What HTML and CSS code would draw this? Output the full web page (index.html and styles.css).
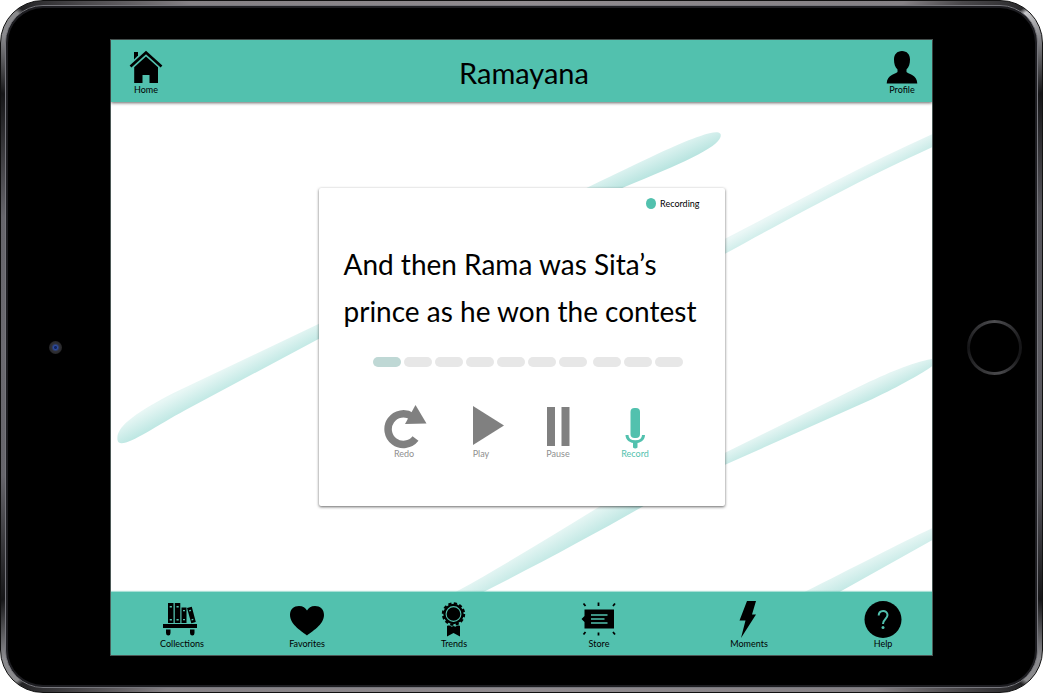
FILE: index.html
```html
<!DOCTYPE html>
<html lang="en">
<head>
<meta charset="utf-8">
<meta name="viewport" content="width=device-width, initial-scale=1">
<title>Ramayana</title>
<link rel="stylesheet" href="styles.css">
</head>
<body>
<div class="device">
  <div class="glass">
    <span class="camera"></span>
    <div class="screen">
      <header class="topbar">
        <a class="nav-item nav-home" href="#home">
          <svg width="34" height="34" viewBox="0 0 34 34" aria-hidden="true">
            <path d="M5 2h4v3.500l-4 4z"/>
            <path d="M1.500 16.500 17 2.500l15.500 14" fill="none" stroke="#000" stroke-width="2.600"/>
            <path d="M17 6.500 29 17.300V33h-8.500v-8h-7v8H5.200V17.300z"/>
          </svg>
          <span>Home</span>
        </a>
        <h1 class="title">Ramayana</h1>
        <a class="nav-item nav-profile" href="#profile">
          <svg width="34" height="34" viewBox="0 0 34 34" aria-hidden="true">
            <path d="M17 1c5 0 8 3.500 8 8.500 0 4.500-1 7.500-3.500 10v2.500c2 2 10.500 2.500 10.800 11.500H1.700C2 24.500 10.500 24 12.500 22v-2.500C10 17 9 14 9 9.500 9 4.500 12 1 17 1z"/>
          </svg>
          <span>Profile</span>
        </a>
      </header>

      <main class="stage">
        <svg class="strokes" viewBox="0 0 822 490" preserveAspectRatio="xMidYMid slice" aria-hidden="true">
          <defs>
            <linearGradient id="brushA" gradientUnits="userSpaceOnUse" x1="96" y1="276" x2="108" y2="299">
              <stop offset="0" stop-color="#e8f7f5"/><stop offset="1" stop-color="#b2e3de"/>
            </linearGradient>
            <linearGradient id="brushA2" gradientUnits="userSpaceOnUse" x1="538" y1="54" x2="548" y2="76">
              <stop offset="0" stop-color="#e0f4f2"/><stop offset="1" stop-color="#aee0db"/>
            </linearGradient>
            <linearGradient id="brushB" gradientUnits="userSpaceOnUse" x1="714" y1="86" x2="722" y2="101">
              <stop offset="0" stop-color="#eaf7f6"/><stop offset="1" stop-color="#c4e9e5"/>
            </linearGradient>
            <linearGradient id="brushC" gradientUnits="userSpaceOnUse" x1="714" y1="303" x2="723" y2="322">
              <stop offset="0" stop-color="#e4f5f3"/><stop offset="1" stop-color="#b2e2dd"/>
            </linearGradient>
            <linearGradient id="brushC2" gradientUnits="userSpaceOnUse" x1="418" y1="446" x2="429" y2="465">
              <stop offset="0" stop-color="#e6f6f4"/><stop offset="1" stop-color="#bfe7e3"/>
            </linearGradient>
            <linearGradient id="brushD" gradientUnits="userSpaceOnUse" x1="762" y1="454" x2="771" y2="473">
              <stop offset="0" stop-color="#e6f6f4"/><stop offset="1" stop-color="#bfe7e3"/>
            </linearGradient>
          </defs>
          <path fill="url(#brushA)" d="M7 338C5 324 27 310 63 291L208 222 300 176V189L208 237 75 308C40 327 9 350 7 338Z"/>
          <path fill="url(#brushA2)" d="M400 124L480 84C530 60 570 40 590 34C604 29 612 29 610 35C607 46 570 62 514 85L400 137Z"/>
          <path fill="url(#brushB)" d="M822 32C740 69 690 98 614 137L520 190 530 200 614 152C700 105 750 78 822 45Z"/>
          <path fill="url(#brushC)" d="M822 257C800 261 780 270 748 285L614 351 560 377V390L614 363 762 297C790 284 814 270 822 264Z"/>
          <path fill="url(#brushC2)" d="M500 398C450 428 400 460 345 490H373C430 461 490 429 540 400Z"/>
          <path fill="url(#brushD)" d="M822 426C790 441 740 467 694 490H729L822 438Z"/>
        </svg>

        <section class="card" aria-label="Recording session">
          <p class="status"><span class="dot"></span>Recording</p>
          <p class="sentence">And then Rama was Sita’s<br>prince as he won the contest</p>
          <ol class="steps" aria-label="Step 1 of 10">
            <li class="step step-done"></li><li class="step"></li><li class="step"></li><li class="step"></li><li class="step"></li>
            <li class="step"></li><li class="step step-last"></li><li class="step"></li><li class="step"></li><li class="step"></li>
          </ol>
          <div class="controls">
            <button class="control" type="button">
              <svg width="48" height="45" viewBox="0 0 48 45" aria-hidden="true">
                <path d="M35.500 34.500A15.300 15.300 0 1 1 32 12.500" fill="none" stroke="#808080" stroke-width="7.500"/>
                <path d="M35.500 1 46.500 19.500 25 20z"/>
              </svg>
              <span>Redo</span>
            </button>
            <button class="control" type="button">
              <svg width="48" height="45" viewBox="0 0 48 45" aria-hidden="true"><path d="M16 2 47 21.500 16 41z"/></svg>
              <span>Play</span>
            </button>
            <button class="control" type="button">
              <svg width="48" height="45" viewBox="0 0 48 45" aria-hidden="true"><path d="M13 3h8v39h-8zM27.500 3h8v39h-8z"/></svg>
              <span>Pause</span>
            </button>
            <button class="control control-active" type="button">
              <svg width="48" height="45" viewBox="0 0 48 45" aria-hidden="true">
                <rect x="19.500" y="4" width="9.500" height="30" rx="4"/>
                <path d="M16 31C16 40 32.500 40 32.500 31" fill="none" stroke="#52c1ae" stroke-width="3"/>
                <path d="M22 37h4.500v6.500q-2.200 2-4.500 0z"/>
              </svg>
              <span>Record</span>
            </button>
          </div>
        </section>
      </main>

      <nav class="tabbar" aria-label="Main">
        <a class="nav-item" href="#collections">
          <svg width="38" height="38" viewBox="0 0 38 38" aria-hidden="true">
            <path d="M5 3h5.500v20H5zM11.800 3h5.500v20h-5.500zM18.500 7.500h5v15.500h-5zM24 8l4.800-1.200 4 15.200-4.500 1.200zM0 24h34v4H0zM3 29.500h4.500v3.500q0 2.500-2.200 2.500T3 33zM27 29.500h4.500v3.500q0 2.500-2.200 2.500T27 33z"/>
            <g fill="#52c1ae"><path d="M6.700 6h2.200v1.500H6.700zM6.700 19h2.200v1.500H6.700zM13.500 6h2.200v1.500h-2.200zM13.500 19h2.200v1.500h-2.200zM20 10h2v1.300h-2zM20 19h2v1.300h-2zM26 10.200l1.800-.5.3 1.200-1.800.5zM28.400 19.200l1.800-.5.3 1.200-1.800.5z"/></g>
          </svg>
          <span>Collections</span>
        </a>
        <a class="nav-item" href="#favorites">
          <svg width="38" height="38" viewBox="0 0 38 38" aria-hidden="true"><path d="M19 35.500C15 32 2 25 2 15 2 9 6 6 11 6c4 0 6.500 2 8 4.500C20.500 8 23 6 27 6c5 0 9 3 9 9 0 10-13 17-17 20.500z"/></svg>
          <span>Favorites</span>
        </a>
        <a class="nav-item" href="#trends">
          <svg width="38" height="38" viewBox="0 0 38 38" aria-hidden="true">
            <circle cx="18.500" cy="14" r="10.200"/>
            <circle cx="18.500" cy="14" r="10.600" fill="none" stroke="#000" stroke-width="2.200" stroke-dasharray="3.200 2.350"/>
            <circle cx="18.500" cy="14" r="7.400" fill="none" stroke="#52c1ae" stroke-width="1.100"/>
            <path d="M12 26c2-1 3.500 0 4.500.8L18.500 26l2 .8C21.500 26 23 25 25 26v10.500L18.500 33 12 36.500z"/>
          </svg>
          <span>Trends</span>
        </a>
        <a class="nav-item" href="#store">
          <svg width="38" height="38" viewBox="0 0 38 38" aria-hidden="true">
            <path d="M4.500 9.500h29.500v19H4.500v-6.500L1.500 19l3-3z"/>
            <path d="M11 15h16.500M11 19h13.500M11 23h16.500" stroke="#52c1ae" stroke-width="1.300"/>
            <path d="M18.500 2.500v3.500M18.500 32.500v3M3.500 3.500 5.500 6M35 3.500 33 6M5.500 32 3.500 34.500M33 32l2 2.500" stroke="#000" stroke-width="1.800"/>
          </svg>
          <span>Store</span>
        </a>
        <a class="nav-item" href="#moments">
          <svg width="38" height="38" viewBox="0 0 38 38" aria-hidden="true"><path d="M17 1h9l-4 13.500h4L11 38 15.500 20.500H9.500z"/></svg>
          <span>Moments</span>
        </a>
        <a class="nav-item" href="#help">
          <svg width="38" height="38" viewBox="0 0 38 38" aria-hidden="true">
            <circle cx="19" cy="19.500" r="18.500"/>
            <path d="M14.700 15.500C14.700 9.500 23.500 9.500 23.500 15c0 4-4.500 4-4.500 9" fill="none" stroke="#52c1ae" stroke-width="2"/>
            <circle cx="19" cy="27.500" r="1.500" fill="#52c1ae"/>
          </svg>
          <span>Help</span>
        </a>
      </nav>
    </div>
    <button class="home-button" type="button" aria-label="Home button"></button>
  </div>
</div>
</body>
</html>
```
FILE: styles.css
```css
:root {
  --teal: #52c1ae;
  --ink: #000;
}

* {
  box-sizing: border-box;
}

body {
  margin: 0;
  background: #fff;
  color: var(--ink);
  font-family: Lato, sans-serif;
}

.device {
  display: flex;
  min-height: 100vh;
  padding: 4px;
  border: 1px solid #111;
  border-radius: 43px;
  background: conic-gradient(
    #918c90 0deg, #858185 48deg, #4a484b 52deg, #2a2a2c 56deg,
    #c8c8ca 56.5deg, #8a8a8e 59deg, #161618 64deg, #55545a 75deg,
    #5b5a60 90deg, #55545a 105deg, #161618 116deg, #8a8a8e 121deg,
    #8a8a8c 123.5deg, #222224 124deg, #4a484b 128deg, #858185 134deg,
    #918c90 180deg, #858185 226deg, #4a484b 232deg, #222224 236deg,
    #8a8a8c 236.5deg, #8a8a8e 239deg, #161618 244deg, #66656b 256deg,
    #6b6a70 270deg, #66656b 284deg, #161618 296deg, #8a8a8e 301deg,
    #8a8a8c 303.5deg, #222224 304deg, #4a484b 308deg, #858185 316deg,
    #918c90 360deg
  ) border-box;
}

.glass {
  flex: 1;
  display: grid;
  grid-template-columns: 104px 1fr 104px;
  align-items: center;
  padding: 33px 0 31px;
  border: 1px solid #77777d;
  border-radius: 38px;
  background: #000;
  box-shadow: inset 0 0 0 2px #1d1d21;
}

.camera {
  width: 13px;
  height: 13px;
  margin-left: 43px;
  border-radius: 50%;
  background: radial-gradient(circle, #10235c 0 1px, #2c4ba0 2px, #303036 4px, #29292b 6px);
}

.home-button {
  justify-self: end;
  width: 55px;
  height: 55px;
  margin-right: 15px;
  padding: 3px;
  border: 0;
  border-radius: 50%;
  background:
    radial-gradient(circle, #000 0 24px, transparent 25px),
    conic-gradient(#4d4d50, #161618 80deg, #161618 110deg, #4a4a4d 170deg, #39393b 200deg, #141416 270deg, #4d4d50);
}

.screen {
  align-self: stretch;
  display: flex;
  flex-direction: column;
  border: 1px solid #4b5755;
  background: #fff;
}

.topbar {
  z-index: 1;
  display: grid;
  grid-template-columns: 1fr auto 1fr;
  align-items: center;
  padding: 10px 13px 6px 18px;
  background: var(--teal);
  box-shadow: 0 1px 3px rgba(0, 0, 0, 0.6);
}

.title {
  margin: 0;
  font-size: 29px;
  line-height: 40px;
  font-weight: 400;
}

.nav-item {
  display: flex;
  flex-direction: column;
  align-items: center;
  color: var(--ink);
  font-size: 9px;
  line-height: 12px;
  text-decoration: none;
}

.nav-home {
  justify-self: start;
}

.nav-profile {
  justify-self: end;
}

.stage {
  position: relative;
  flex: 1;
  display: grid;
  place-items: center;
  padding: 15px 16px 16px;
  overflow: hidden;
}

.strokes {
  position: absolute;
  inset: 0;
  width: 100%;
  height: 100%;
}

.card {
  position: relative;
  width: 100%;
  max-width: 406px;
  padding: 10px 25px 47px;
  border-radius: 2px;
  background: #fff;
  box-shadow: 0 1px 3px rgba(0, 0, 0, 0.6);
}

.status {
  display: flex;
  align-items: center;
  justify-content: flex-end;
  gap: 4px;
  margin: 0 0 31px;
  font-size: 9px;
  line-height: 12px;
}

.dot {
  width: 10px;
  height: 11px;
  border-radius: 50%;
  background: var(--teal);
}

.sentence {
  margin: 0 0 22px;
  font-size: 28px;
  line-height: 47px;
}

.steps {
  display: flex;
  justify-content: center;
  gap: 3px;
  margin: 0 -12px 37px 0;
  padding: 0;
  list-style: none;
}

.step {
  width: 28px;
  height: 10px;
  border-radius: 5px;
  background: #e7e7e7;
}

.step-done {
  background: #bfd8d5;
}

.step-last {
  margin-right: 3px;
}

.controls {
  display: grid;
  grid-template-columns: repeat(4, 77px);
  justify-content: center;
  margin-right: 4px;
}

.control {
  display: flex;
  flex-direction: column;
  align-items: center;
  padding: 0;
  border: 0;
  background: none;
  color: #8f8f8f;
  font: 9px/10px Lato, sans-serif;
}

.control svg {
  fill: #808080;
}

.control-active {
  color: var(--teal);
}

.control-active svg {
  fill: var(--teal);
}

svg {
  display: block;
  fill: currentColor;
}

.tabbar {
  z-index: 1;
  display: grid;
  grid-template-columns: 124fr 126fr 168fr 122fr 178fr 90fr;
  padding: 8px 4px 5px 9px;
  background: var(--teal);
  box-shadow: 0 -1px 1px rgba(82, 193, 174, 0.5);
}
```
